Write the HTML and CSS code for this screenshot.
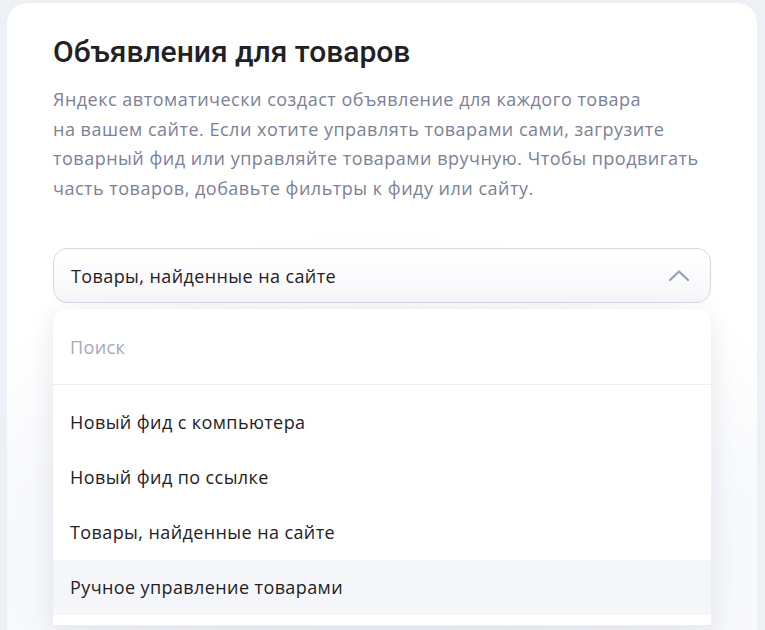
FILE: index.html
```html
<!DOCTYPE html>
<html lang="ru">
<head>
  <meta charset="UTF-8">
  <meta name="viewport" content="width=device-width, initial-scale=1.0">
  <title>Объявления для товаров</title>
  <link rel="stylesheet" href="styles.css">
</head>
<body>
  <div class="page">
    <section class="card">
      <h1>Объявления для товаров</h1>
      <p class="desc">
        Яндекс автоматически создаст объявление для каждого товара<br>
        на вашем сайте. Если хотите управлять товарами сами, загрузите<br>
        товарный фид или управляйте товарами вручную. Чтобы продвигать<br>
        часть товаров, добавьте фильтры к фиду или сайту.
      </p>

      <div class="source-select">
        <button class="select-field" type="button">
          <span>Товары, найденные на сайте</span>
          <svg class="chevron" width="22" height="13" viewBox="0 0 22 13">
            <path d="M2 11 L11 2.5 L20 11" fill="none" stroke="#9aa0b2" stroke-width="2.2" stroke-linecap="round" stroke-linejoin="round"/>
          </svg>
        </button>

        <div class="popup">
          <div class="search">
            <input type="text" placeholder="Поиск">
          </div>
          <ul class="options">
            <li>Новый фид с компьютера</li>
            <li>Новый фид по ссылке</li>
            <li>Товары, найденные на сайте</li>
            <li class="hover">Ручное управление товарами</li>
          </ul>
          <div class="options-end"></div>
        </div>
      </div>
    </section>
  </div>
</body>
</html>
```

FILE: styles.css
```css
body {
  margin: 0;
  background-color: #edf0f5;
  font-family: "Open Sans", "Noto Sans", Arial, sans-serif;
  color: #1f2126;
}

.page {
  padding: 3px 8px 0 7px;
  height: 627px;
  overflow: hidden;
}

.card {
  background-color: #fff;
  border-radius: 20px 20px 0 0;
  padding: 31px 46px 0;
  height: 640px;
  background-image: radial-gradient(ellipse 620px 420px at 50% 560px, #eef0f5 0%, #f6f7fa 55%, #fff 80%);
}

h1 {
  margin: 0;
  font-family: Roboto, "Open Sans", Arial, sans-serif;
  font-size: 30px;
  font-weight: 500;
  line-height: 36px;
  color: #1f2126;
}

.desc {
  margin: 15px 0 0;
  font-size: 18px;
  line-height: 29.5px;
  letter-spacing: 0.5px;
  color: #7b8197;
}

.source-select {
  margin-top: 45px;
}

.select-field {
  display: flex;
  align-items: center;
  justify-content: space-between;
  width: 100%;
  height: 55px;
  padding: 0 20px 0 17px;
  box-sizing: border-box;
  border: 1px solid #d6d9e4;
  border-radius: 14px;
  background: linear-gradient(#fff, #f6f7fa);
  font-family: inherit;
  font-size: 18px;
  letter-spacing: 0.4px;
  color: #1f2126;
  cursor: pointer;
}

.popup {
  margin-top: 6px;
  background-color: #fff;
  border-radius: 14px 14px 0 0;
  box-shadow: 0 4px 24px rgba(40, 50, 90, 0.1);
}

.search {
  height: 75px;
  display: flex;
  align-items: center;
  border-bottom: 1px solid #eceef3;
  padding: 0 17px;
}

.search input {
  width: 100%;
  border: none;
  outline: none;
  font-family: inherit;
  font-size: 18px;
  letter-spacing: 0.4px;
  color: #1f2126;
  background: transparent;
  padding: 0;
}

.search input::placeholder {
  color: #a3a9ba;
}

.options {
  list-style: none;
  margin: 0;
  padding: 10px 0 0;
}

.options li {
  height: 55px;
  line-height: 55px;
  padding: 0 17px;
  font-size: 18px;
  letter-spacing: 0.4px;
}

.options li.hover {
  background-color: #f5f6fa;
}

.options-end {
  height: 10px;
  border-bottom: 1px solid #eceef3;
}
```
